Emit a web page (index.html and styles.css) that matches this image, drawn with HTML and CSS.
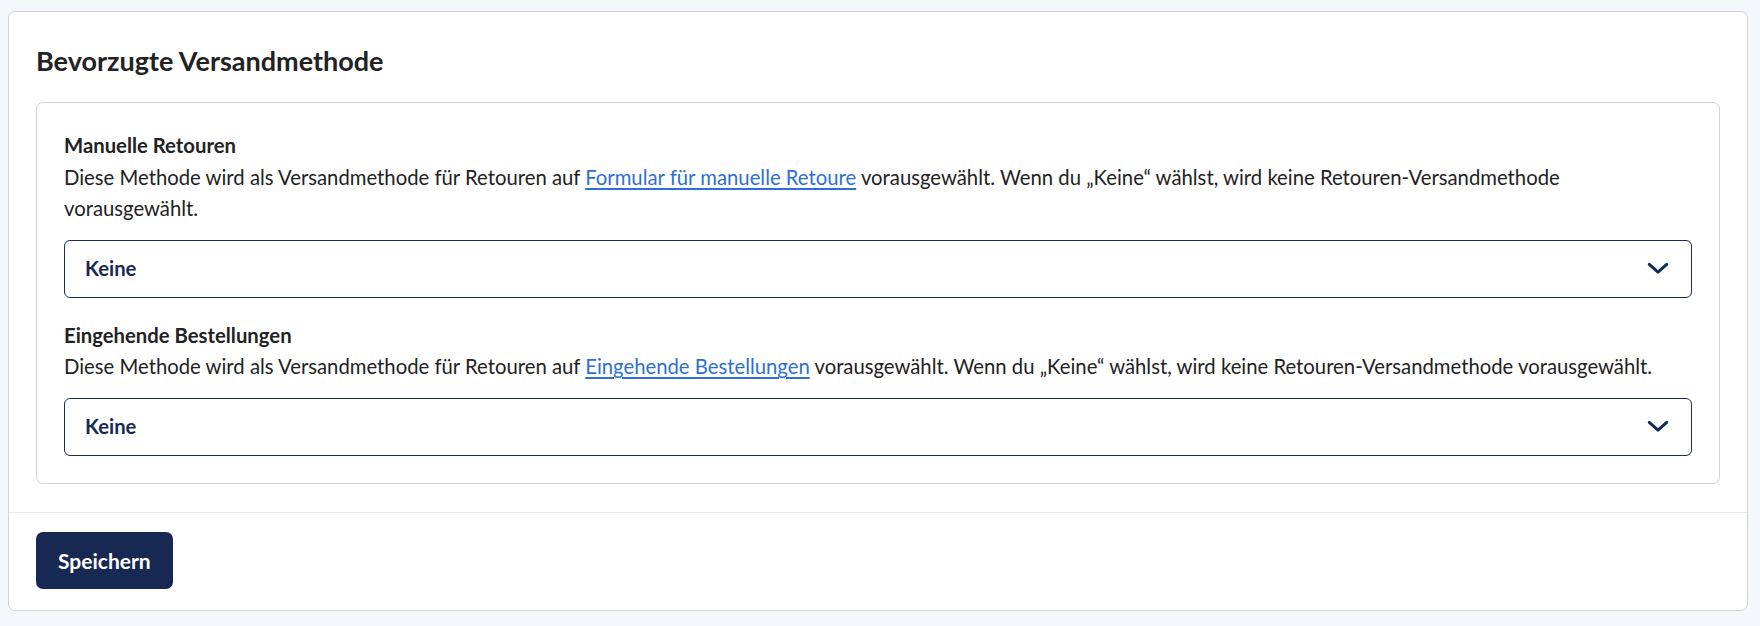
FILE: index.html
```html
<!DOCTYPE html>
<html lang="de">
<head>
<meta charset="utf-8">
<title>Bevorzugte Versandmethode</title>
<link rel="stylesheet" href="styles.css">
</head>
<body>
<div class="card">
  <div class="card-body">
    <h2 class="card-title">Bevorzugte Versandmethode</h2>
    <div class="panel">
      <div class="field">
        <div class="field-label">Manuelle Retouren</div>
        <p class="field-desc">Diese Methode wird als Versandmethode für Retouren auf <a href="#" class="link">Formular für manuelle Retoure</a> vorausgewählt. Wenn du „Keine“ wählst, wird keine Retouren-Versandmethode vorausgewählt.</p>
        <div class="select">
          <span class="select-value">Keine</span>
          <svg class="chevron" viewBox="0 0 24 14" width="22" height="13" aria-hidden="true"><polyline points="2.5,2.5 12,11 21.5,2.5" fill="none" stroke="currentColor" stroke-width="3.3" stroke-linecap="round" stroke-linejoin="round"/></svg>
        </div>
      </div>
      <div class="field">
        <div class="field-label">Eingehende Bestellungen</div>
        <p class="field-desc">Diese Methode wird als Versandmethode für Retouren auf <a href="#" class="link">Eingehende Bestellungen</a> vorausgewählt. Wenn du „Keine“ wählst, wird keine Retouren-Versandmethode vorausgewählt.</p>
        <div class="select">
          <span class="select-value">Keine</span>
          <svg class="chevron" viewBox="0 0 24 14" width="22" height="13" aria-hidden="true"><polyline points="2.5,2.5 12,11 21.5,2.5" fill="none" stroke="currentColor" stroke-width="3.3" stroke-linecap="round" stroke-linejoin="round"/></svg>
        </div>
      </div>
    </div>
  </div>
  <div class="card-footer">
    <button class="btn" type="button">Speichern</button>
  </div>
</div>
</body>
</html>
```
FILE: styles.css
```css
* { box-sizing: border-box; }
html, body { height: 100%; }
body {
  margin: 0;
  padding: 11px 12px 15px 8px;
  background: #f4f8fc;
  font-family: "Lato", "Liberation Sans", sans-serif;
  color: #222222;
  font-size: 20.3px;
  line-height: 31.5px;
}
.card {
  background: #ffffff;
  border: 1px solid #cfd2d6;
  border-radius: 7px;
  height: 600px;
  display: flex;
  flex-direction: column;
}
.card-body {
  padding: 28px 27px 28px 27px;
}
.card-title {
  margin: 0 0 20px 0;
  font-size: 27px;
  line-height: 42px;
  font-weight: 700;
  color: #222222;
}
.panel {
  border: 1px solid #cfd2d6;
  border-radius: 7px;
  padding: 27px 27px 27px 27px;
  display: flex;
  flex-direction: column;
  gap: 22px;
}
.field-label {
  font-weight: 700;
  color: #222222;
}
.field-desc {
  margin: 0 0 15px 0;
}
.link {
  color: #2e6fd3;
  text-decoration: underline;
  text-underline-offset: 3px;
}
.select {
  height: 58px;
  border: 1px solid #1b2a56;
  border-radius: 6px;
  display: flex;
  align-items: center;
  justify-content: space-between;
  padding: 0 22px 0 20px;
}
.select-value {
  font-weight: 700;
  color: #172a55;
}
.chevron { color: #172a55; display: block; }
.card-footer {
  border-top: 1px solid #e6e7e9;
  padding: 19px 27px 21px 27px;
}
.btn {
  background: #172852;
  color: #ffffff;
  border: none;
  border-radius: 7px;
  height: 57px;
  padding: 0 22px;
  font-family: inherit;
  font-size: 21px;
  font-weight: 700;
  cursor: pointer;
}
```
